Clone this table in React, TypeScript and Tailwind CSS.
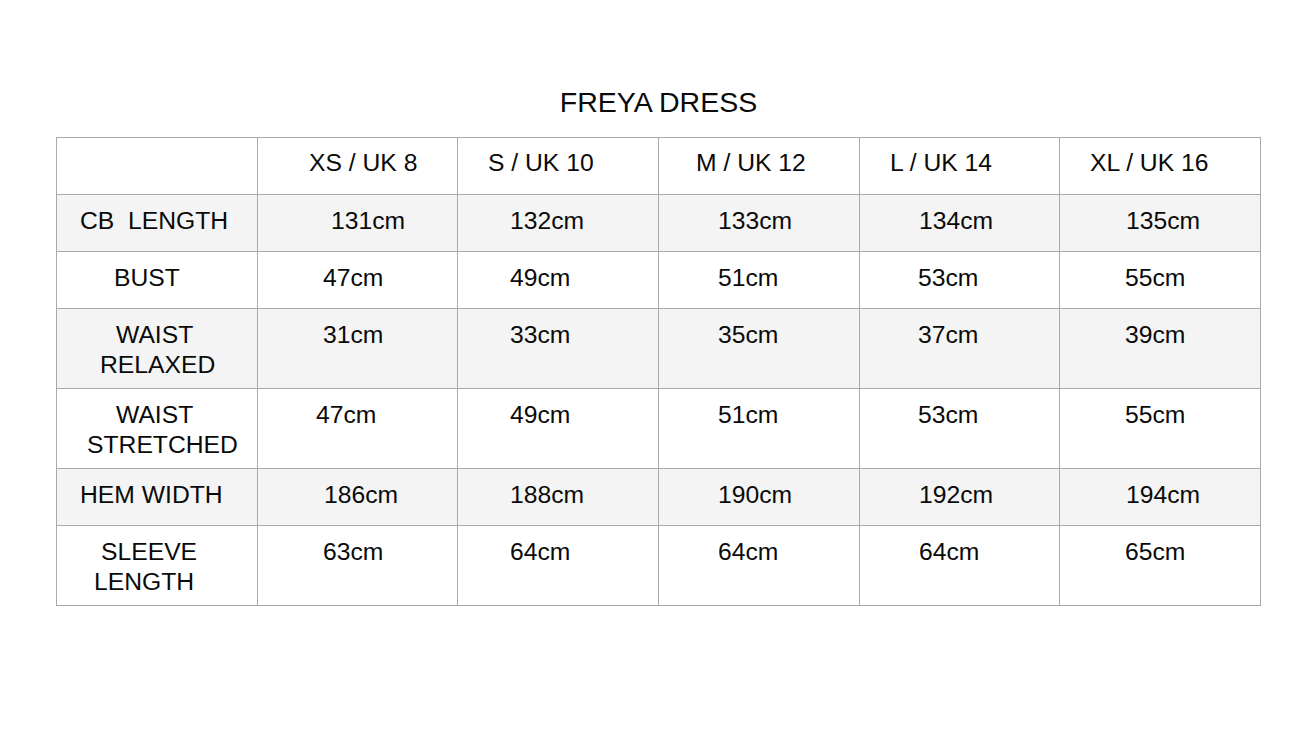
import React from 'react';

type Cell = { lines: string[]; pad: string[] };

const COLS = ['w-[201px]', 'w-[200px]', 'w-[201px]', 'w-[201px]', 'w-[200px]', 'w-[201px]'];

const header: Cell[] = [
  { lines: [''], pad: ['pl-0'] },
  { lines: ['XS / UK 8'], pad: ['pl-[51px]'] },
  { lines: ['S / UK 10'], pad: ['pl-[30px]'] },
  { lines: ['M / UK 12'], pad: ['pl-[37px]'] },
  { lines: ['L / UK 14'], pad: ['pl-[30px]'] },
  { lines: ['XL / UK 16'], pad: ['pl-[30px]'] },
];

const rows: { tall: boolean; shaded: boolean; cells: Cell[] }[] = [
  {
    tall: false,
    shaded: true,
    cells: [
      { lines: ['CB  LENGTH'], pad: ['pl-[23px]'] },
      { lines: ['131cm'], pad: ['pl-[73px]'] },
      { lines: ['132cm'], pad: ['pl-[52px]'] },
      { lines: ['133cm'], pad: ['pl-[59px]'] },
      { lines: ['134cm'], pad: ['pl-[59px]'] },
      { lines: ['135cm'], pad: ['pl-[66px]'] },
    ],
  },
  {
    tall: false,
    shaded: false,
    cells: [
      { lines: ['BUST'], pad: ['pl-[57px]'] },
      { lines: ['47cm'], pad: ['pl-[65px]'] },
      { lines: ['49cm'], pad: ['pl-[52px]'] },
      { lines: ['51cm'], pad: ['pl-[59px]'] },
      { lines: ['53cm'], pad: ['pl-[58px]'] },
      { lines: ['55cm'], pad: ['pl-[65px]'] },
    ],
  },
  {
    tall: true,
    shaded: true,
    cells: [
      { lines: ['WAIST', 'RELAXED'], pad: ['pl-[59px]', 'pl-[43px]'] },
      { lines: ['31cm'], pad: ['pl-[65px]'] },
      { lines: ['33cm'], pad: ['pl-[52px]'] },
      { lines: ['35cm'], pad: ['pl-[59px]'] },
      { lines: ['37cm'], pad: ['pl-[58px]'] },
      { lines: ['39cm'], pad: ['pl-[65px]'] },
    ],
  },
  {
    tall: true,
    shaded: false,
    cells: [
      { lines: ['WAIST', 'STRETCHED'], pad: ['pl-[59px]', 'pl-[30px]'] },
      { lines: ['47cm'], pad: ['pl-[58px]'] },
      { lines: ['49cm'], pad: ['pl-[52px]'] },
      { lines: ['51cm'], pad: ['pl-[59px]'] },
      { lines: ['53cm'], pad: ['pl-[58px]'] },
      { lines: ['55cm'], pad: ['pl-[65px]'] },
    ],
  },
  {
    tall: false,
    shaded: true,
    cells: [
      { lines: ['HEM WIDTH'], pad: ['pl-[23px]'] },
      { lines: ['186cm'], pad: ['pl-[66px]'] },
      { lines: ['188cm'], pad: ['pl-[52px]'] },
      { lines: ['190cm'], pad: ['pl-[59px]'] },
      { lines: ['192cm'], pad: ['pl-[59px]'] },
      { lines: ['194cm'], pad: ['pl-[66px]'] },
    ],
  },
  {
    tall: true,
    shaded: false,
    cells: [
      { lines: ['SLEEVE', 'LENGTH'], pad: ['pl-[44px]', 'pl-[37px]'] },
      { lines: ['63cm'], pad: ['pl-[65px]'] },
      { lines: ['64cm'], pad: ['pl-[52px]'] },
      { lines: ['64cm'], pad: ['pl-[59px]'] },
      { lines: ['64cm'], pad: ['pl-[59px]'] },
      { lines: ['65cm'], pad: ['pl-[65px]'] },
    ],
  },
];

const Row: React.FC<{ cells: Cell[]; tall: boolean; shaded: boolean; first?: boolean }> = ({ cells, tall, shaded, first }) => (
  <div className={`flex ${tall ? 'h-[80px]' : 'h-[57px]'} ${shaded ? 'bg-[#f4f4f4]' : 'bg-white'}`}>
    {cells.map((c, i) => (
      <div
        key={i}
        className={`${COLS[i]} shrink-0 border-r border-b border-[#a9a9a9] ${first ? 'pt-[10px]' : 'pt-[11px]'}`}
      >
        {c.lines.map((l, j) => (
          <div key={j} className={`${c.pad[j]} h-[30px] leading-[30px] whitespace-pre`}>
            {l}
          </div>
        ))}
      </div>
    ))}
  </div>
);

export default function App() {
  return (
    <div className="w-[1308px] h-[740px] bg-white text-[#0a0a0a] font-['Liberation_Sans',Arial,sans-serif] pt-[85px]">
      <div className="ml-[56px] w-[1205px]">
        <h1 className="text-center text-[28.5px] leading-[34px] h-[34px] font-normal">FREYA DRESS</h1>
        <div className="mt-[18px] border-l border-t border-[#a9a9a9] text-[24.7px]">
          <Row cells={header} tall={false} shaded={false} first />
          {rows.map((r, i) => (
            <Row key={i} cells={r.cells} tall={r.tall} shaded={r.shaded} />
          ))}
        </div>
      </div>
    </div>
  );
}
